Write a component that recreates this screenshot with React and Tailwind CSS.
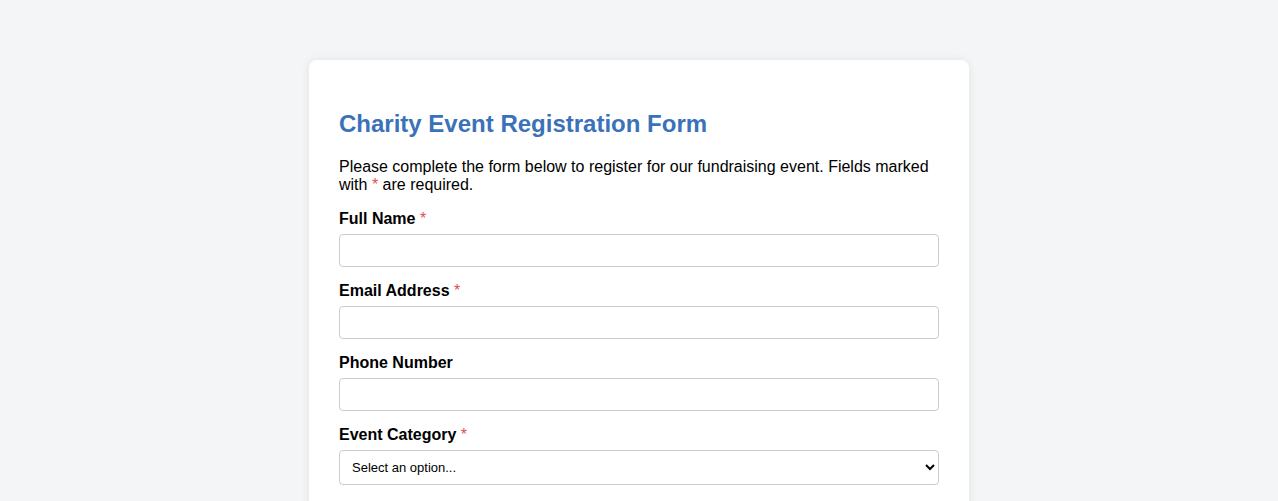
export default function App() {
  const Field = ({ label, required, children }) => (
    <div className="mb-[15px]">
      <label className="block mb-[6px] text-[16px] leading-[18px] font-bold text-black">
        {label}
        {required && <span className="text-[#d9534f] font-normal"> *</span>}
      </label>
      {children}
    </div>
  );
  return (
    <div className="min-h-[501px] bg-[#f4f5f7] pt-[60px] flex justify-center" style={{ fontFamily: '"Liberation Sans", Arial, sans-serif' }}>
      <div className="w-[660px] bg-white rounded-[8px] shadow-[0_0_10px_rgba(0,0,0,0.08)] px-[30px] pt-[50px] pb-[30px]">
        <h1 className="text-[24px] leading-[28px] font-bold text-[#3a72b9] mb-[20px]">Charity Event Registration Form</h1>
        <p className="text-[16px] leading-[18px] text-black mb-[16px]">
          Please complete the form below to register for our fundraising event. Fields marked with <span className="text-[#d9534f]">*</span> are required.
        </p>
        <Field label="Full Name" required>
          <input className="block w-full h-[33px] border border-[#cccccc] rounded-[4px] px-[10px] text-[13px] outline-none" />
        </Field>
        <Field label="Email Address" required>
          <input className="block w-full h-[33px] border border-[#cccccc] rounded-[4px] px-[10px] text-[13px] outline-none" />
        </Field>
        <Field label="Phone Number">
          <input className="block w-full h-[33px] border border-[#cccccc] rounded-[4px] px-[10px] text-[13px] outline-none" />
        </Field>
        <Field label="Event Category" required>
          <select className="block w-full h-[35px] border border-[#cccccc] rounded-[4px] pl-[8px] pr-[4px] text-[13px] bg-white text-black outline-none" style={{ appearance: 'auto' }}>
            <option>Select an option...</option>
          </select>
        </Field>
      </div>
    </div>
  );
}
